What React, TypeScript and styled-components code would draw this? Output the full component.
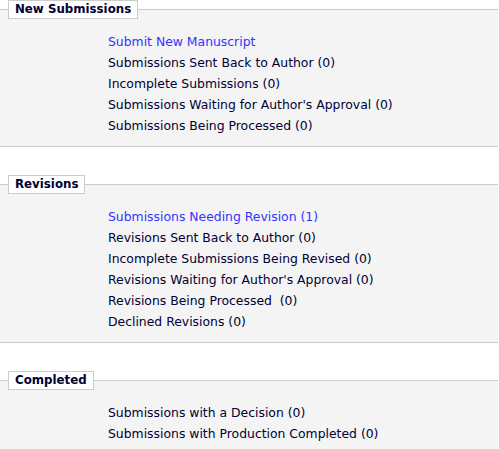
import React from "react";
import styled, { createGlobalStyle } from "styled-components";

const Global = createGlobalStyle`
  html, body { margin: 0; padding: 0; background: #ffffff; }
  body { font-family: "DejaVu Sans", Verdana, sans-serif; font-size: 12.4px; color: #000033; }
`;

const Page = styled.div`
  display: flex;
  flex-direction: column;
  gap: 28px;
  padding-right: 1px;
`;

const Box = styled.fieldset`
  margin: 0;
  padding: 0;
  border: none;
  border-top: 1px solid #cccccc;
  border-bottom: 1px solid #cccccc;
  background: #f4f4f4;
  min-width: 0;
`;

const Legend = styled.legend`
  margin-left: 8px;
  padding: 1px 6px 2px 6px;
  border: 1px solid #cccccc;
  background: #ffffff;
  font-weight: bold;
  font-size: 11.8px;
  line-height: 14px;
  color: #000033;
`;

const List = styled.ul`
  list-style: none;
  margin: 0;
  padding: 12px 0 10px 108px;
  display: flex;
  flex-direction: column;
`;

const Item = styled.li<{ $link?: boolean }>`
  line-height: 21px;
  white-space: pre;
  color: ${(p) => (p.$link ? "#3333ff" : "#000033")};
`;

const sections: { title: string; items: { text: string; link?: boolean }[] }[] = [
  {
    title: "New Submissions",
    items: [
      { text: "Submit New Manuscript", link: true },
      { text: "Submissions Sent Back to Author (0)" },
      { text: "Incomplete Submissions (0)" },
      { text: "Submissions Waiting for Author's Approval (0)" },
      { text: "Submissions Being Processed (0)" },
    ],
  },
  {
    title: "Revisions",
    items: [
      { text: "Submissions Needing Revision (1)", link: true },
      { text: "Revisions Sent Back to Author (0)" },
      { text: "Incomplete Submissions Being Revised (0)" },
      { text: "Revisions Waiting for Author's Approval (0)" },
      { text: "Revisions Being Processed  (0)" },
      { text: "Declined Revisions (0)" },
    ],
  },
  {
    title: "Completed",
    items: [
      { text: "Submissions with a Decision (0)" },
      { text: "Submissions with Production Completed (0)" },
    ],
  },
];

export default function App() {
  return (
    <>
      <Global />
      <Page>
        {sections.map((s) => (
          <Box key={s.title}>
            <Legend>{s.title}</Legend>
            <List>
              {s.items.map((it) => (
                <Item key={it.text} $link={it.link}>
                  {it.text}
                </Item>
              ))}
            </List>
          </Box>
        ))}
      </Page>
    </>
  );
}
